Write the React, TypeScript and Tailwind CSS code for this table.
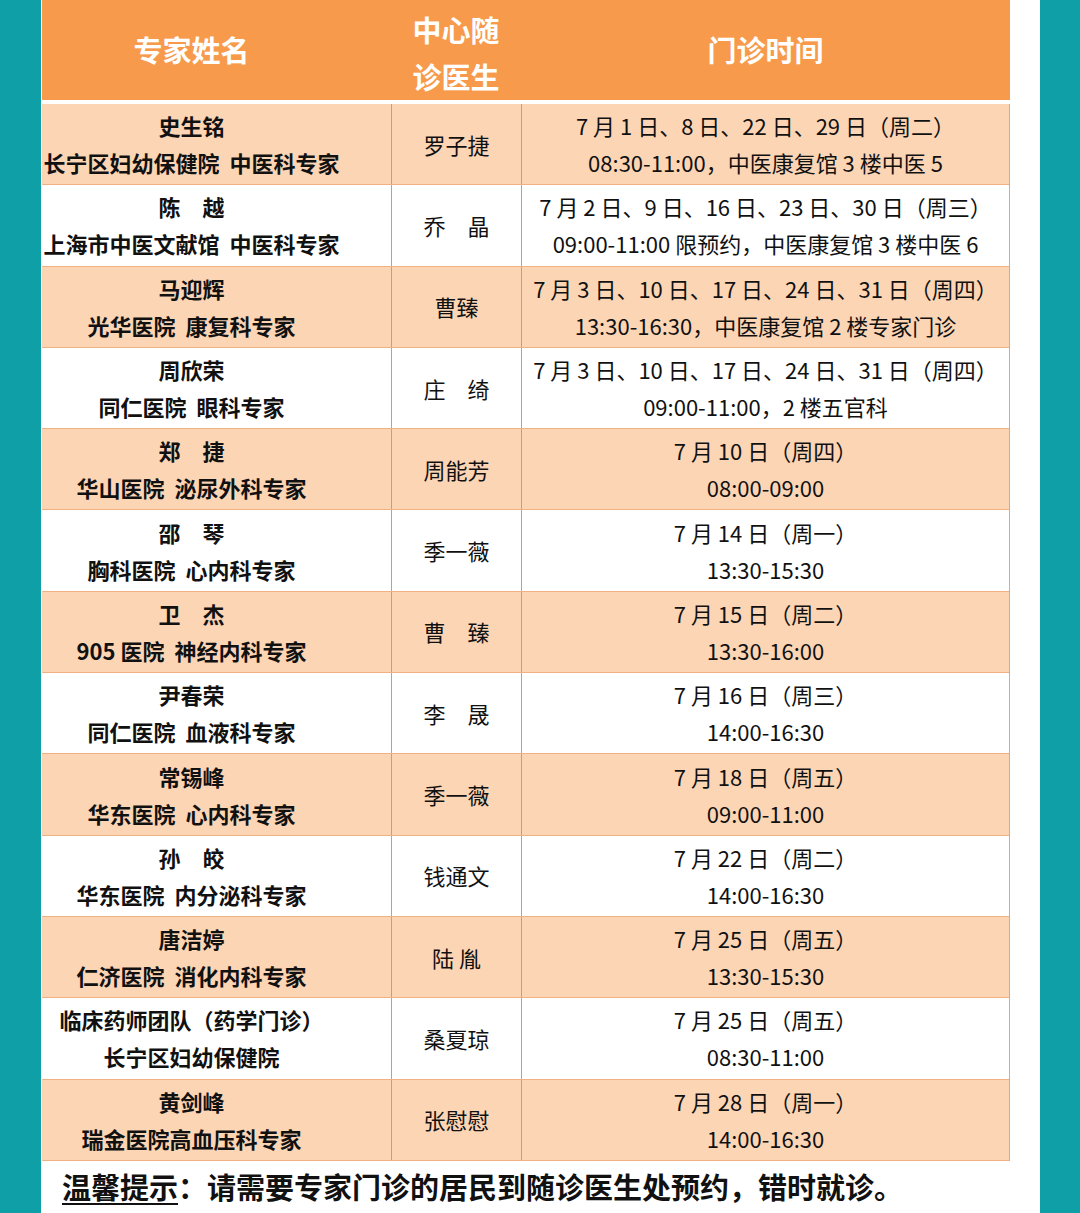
import React from 'react';

type Row = {
  name: string;
  org: string;
  doctor: string;
  date: string;
  time: string;
};

const rows: Row[] = [
  { name: '史生铭', org: '长宁区妇幼保健院  中医科专家', doctor: '罗子捷', date: '7 月 1 日、8 日、22 日、29 日（周二）', time: '08:30-11:00，中医康复馆 3 楼中医 5' },
  { name: '陈　越', org: '上海市中医文献馆  中医科专家', doctor: '乔　晶', date: '7 月 2 日、9 日、16 日、23 日、30 日（周三）', time: '09:00-11:00 限预约，中医康复馆 3 楼中医 6' },
  { name: '马迎辉', org: '光华医院  康复科专家', doctor: '曹臻', date: '7 月 3 日、10 日、17 日、24 日、31 日（周四）', time: '13:30-16:30，中医康复馆 2 楼专家门诊' },
  { name: '周欣荣', org: '同仁医院  眼科专家', doctor: '庄　绮', date: '7 月 3 日、10 日、17 日、24 日、31 日（周四）', time: '09:00-11:00，2 楼五官科' },
  { name: '郑　捷', org: '华山医院  泌尿外科专家', doctor: '周能芳', date: '7 月 10 日（周四）', time: '08:00-09:00' },
  { name: '邵　琴', org: '胸科医院  心内科专家', doctor: '季一薇', date: '7 月 14 日（周一）', time: '13:30-15:30' },
  { name: '卫　杰', org: '905 医院  神经内科专家', doctor: '曹　臻', date: '7 月 15 日（周二）', time: '13:30-16:00' },
  { name: '尹春荣', org: '同仁医院  血液科专家', doctor: '李　晟', date: '7 月 16 日（周三）', time: '14:00-16:30' },
  { name: '常锡峰', org: '华东医院  心内科专家', doctor: '季一薇', date: '7 月 18 日（周五）', time: '09:00-11:00' },
  { name: '孙　皎', org: '华东医院  内分泌科专家', doctor: '钱通文', date: '7 月 22 日（周二）', time: '14:00-16:30' },
  { name: '唐洁婷', org: '仁济医院  消化内科专家', doctor: '陆 胤', date: '7 月 25 日（周五）', time: '13:30-15:30' },
  { name: '临床药师团队（药学门诊）', org: '长宁区妇幼保健院', doctor: '桑夏琼', date: '7 月 25 日（周五）', time: '08:30-11:00' },
  { name: '黄剑峰', org: '瑞金医院高血压科专家', doctor: '张慰慰', date: '7 月 28 日（周一）', time: '14:00-16:30' },
];

const font = { fontFamily: '"Noto Sans CJK SC", "Noto Sans", sans-serif' };

export default function App() {
  return (
    <div className="flex w-[1080px] h-[1213px] bg-white overflow-hidden" style={font}>
      <div className="w-[41px] shrink-0 bg-[#0e9fa7]" />

      <div className="flex-1 flex flex-col">
        <div className="w-[968px] ml-[1px]">
          {/* Header */}
          <div className="grid grid-cols-[349px_130px_1fr] h-[104px] bg-[#f79a4b] border-b-4 border-white text-white font-bold text-[29px]">
            <div className="flex items-center justify-center pr-[50px]">专家姓名</div>
            <div className="flex flex-col items-center justify-center pt-[6px] leading-[47px]">
              <span>中心随</span>
              <span>诊医生</span>
            </div>
            <div className="flex items-center justify-center">门诊时间</div>
          </div>

          {/* Rows */}
          <div className="border-r border-[#e3a778]">
            {rows.map((row, i) => (
              <div
                key={i}
                className={`grid grid-cols-[349px_130px_1fr] h-[81.3px] border-b border-[#f0b283] text-[#111] ${i % 2 === 0 ? 'bg-[#fcd5b5]' : 'bg-white'}`}
              >
                <div className="flex flex-col items-center justify-center pr-[50px] font-bold text-[22px] leading-[37px] whitespace-pre">
                  <span>{row.name}</span>
                  <span>{row.org}</span>
                </div>
                <div className="flex items-center justify-center border-l border-[#d39a6c] text-[22px] whitespace-pre">
                  {row.doctor}
                </div>
                <div className="flex flex-col items-center justify-center border-l border-[#d39a6c] text-[22px] leading-[37px] whitespace-nowrap">
                  <span>{row.date}</span>
                  <span>{row.time}</span>
                </div>
              </div>
            ))}
          </div>
        </div>

        {/* Footer note */}
        <div className="flex-1 flex items-center pl-[21px] font-bold text-[29px] text-[#111]">
          <span className="underline underline-offset-4 decoration-2">温馨提示</span>
          <span>：请需要专家门诊的居民到随诊医生处预约，错时就诊。</span>
        </div>
      </div>

      <div className="w-[40px] shrink-0 bg-[#0e9fa7]" />
    </div>
  );
}
